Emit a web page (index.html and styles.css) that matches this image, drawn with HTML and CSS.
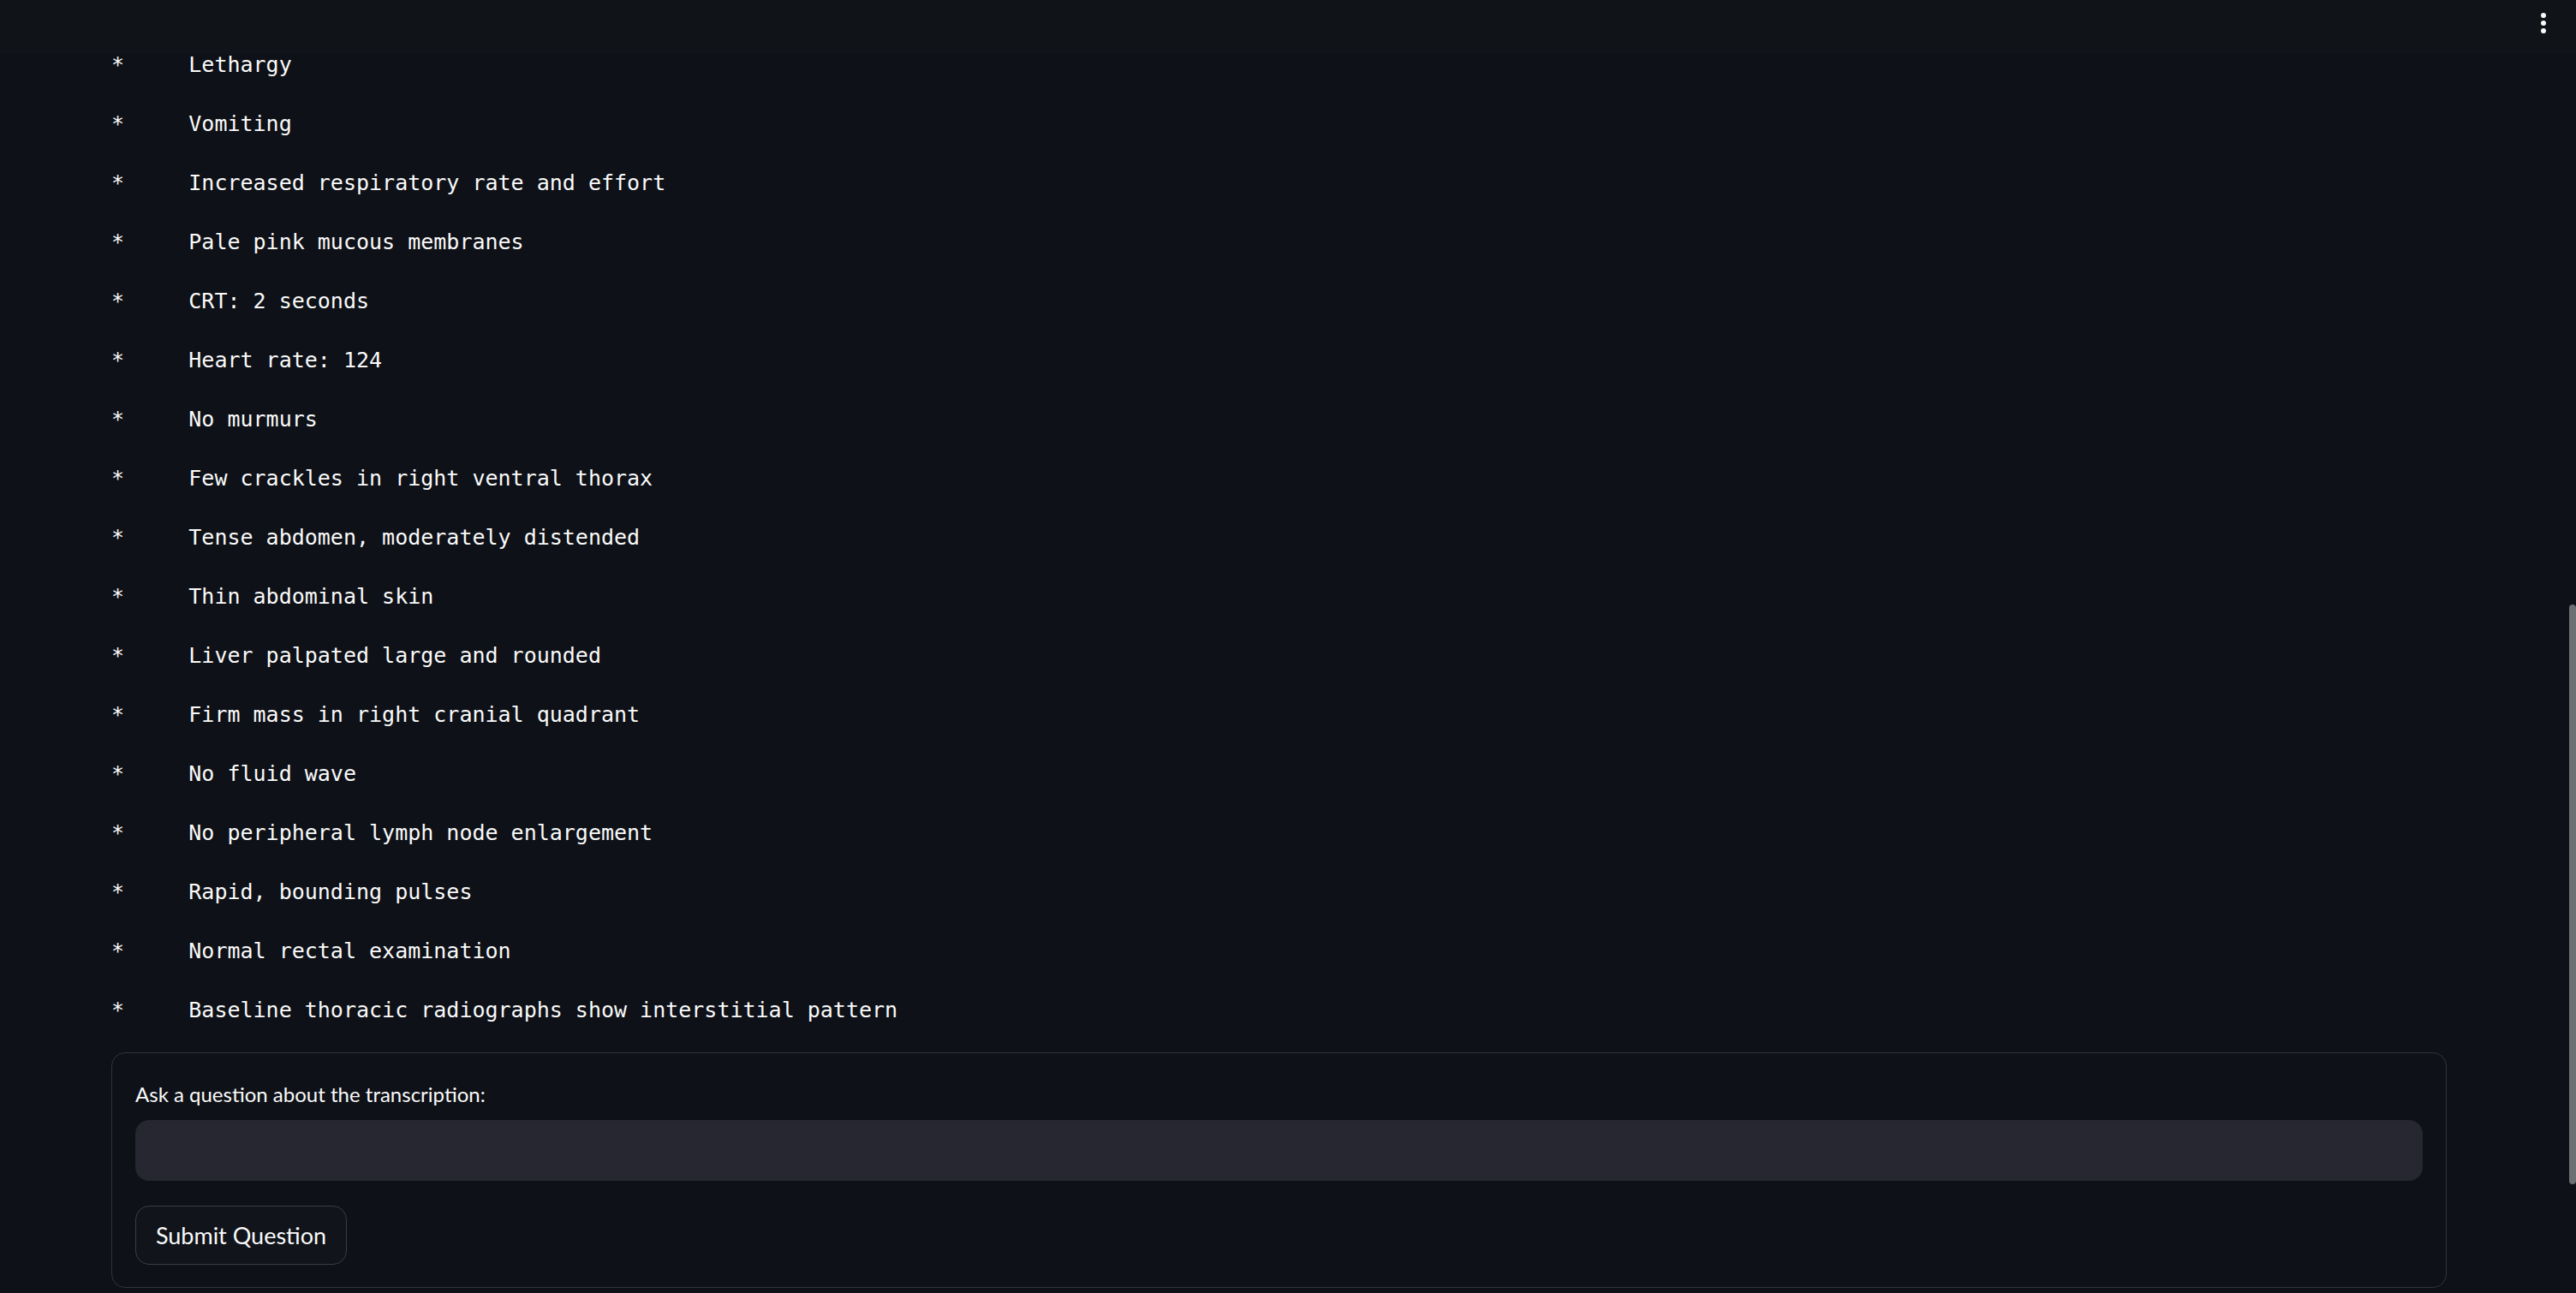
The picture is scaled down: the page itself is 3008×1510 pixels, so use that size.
FILE: index.html
```html
<!DOCTYPE html>
<html lang="en">

<head>
    <meta charset="UTF-8" />
    <meta name="viewport" content="width=device-width, initial-scale=1" />
    <title>Transcription</title>
    <link rel="stylesheet" href="styles.css">
</head>

<body>

    <!-- Top bar -->
    <header class="top-bar">
        <button class="menu-btn" aria-label="Main menu">
            <span class="dot"></span>
            <span class="dot"></span>
            <span class="dot"></span>
        </button>
    </header>

    <main class="main-block">

        <!-- Transcription -->
        <div class="transcript">
            <div class="line">*     Lethargy</div>
            <div class="line">*     Vomiting</div>
            <div class="line">*     Increased respiratory rate and effort</div>
            <div class="line">*     Pale pink mucous membranes</div>
            <div class="line">*     CRT: 2 seconds</div>
            <div class="line">*     Heart rate: 124</div>
            <div class="line">*     No murmurs</div>
            <div class="line">*     Few crackles in right ventral thorax</div>
            <div class="line">*     Tense abdomen, moderately distended</div>
            <div class="line">*     Thin abdominal skin</div>
            <div class="line">*     Liver palpated large and rounded</div>
            <div class="line">*     Firm mass in right cranial quadrant</div>
            <div class="line">*     No fluid wave</div>
            <div class="line">*     No peripheral lymph node enlargement</div>
            <div class="line">*     Rapid, bounding pulses</div>
            <div class="line">*     Normal rectal examination</div>
            <div class="line">*     Baseline thoracic radiographs show interstitial pattern</div>
        </div>

        <!-- Question form -->
        <form class="question-form" onsubmit="return false;">
            <label class="field-label" for="question">Ask a question about the transcription:</label>
            <input class="text-input" id="question" type="text" />
            <button class="submit-btn" type="submit">Submit Question</button>
        </form>

    </main>

    <div class="scroll-thumb"></div>

</body>

</html>
```

FILE: styles.css
```css
body {
    margin: 0;
    background-color: #0e1117;
    color: #fafafa;
    font-family: Lato, "Noto Sans", sans-serif;
    overflow: hidden;
}

.top-bar {
    position: fixed;
    top: 0;
    left: 0;
    right: 0;
    height: 63px;
    background-color: #101318;
    z-index: 5;
}

.menu-btn {
    position: absolute;
    top: 15px;
    right: 32px;
    width: 12px;
    display: flex;
    flex-direction: column;
    align-items: center;
    gap: 3px;
    padding: 0;
    border: none;
    background: none;
    cursor: pointer;
}

.dot {
    width: 6px;
    height: 6px;
    border-radius: 50%;
    background-color: #fafafa;
}

.main-block {
    padding: 41px 151px 0 130px;
}

.line {
    font-family: "DejaVu Sans Mono", "Liberation Mono", monospace;
    font-size: 25px;
    line-height: 69px;
    height: 69px;
    white-space: pre;
    color: #fafafa;
}

.question-form {
    margin-top: 15px;
    border: 1px solid #31333a;
    border-radius: 16px;
    padding: 31px 27px 26px;
    display: flex;
    flex-direction: column;
    align-items: flex-start;
}

.field-label {
    font-size: 24px;
    line-height: 34px;
    color: #fafafa;
    margin-bottom: 13px;
}

.text-input {
    box-sizing: border-box;
    width: 100%;
    height: 71px;
    border: none;
    border-radius: 16px;
    background-color: #262730;
    color: #fafafa;
    font-size: 28px;
    padding: 0 24px;
    margin: 0 0 29px;
    outline: none;
}

.submit-btn {
    box-sizing: border-box;
    width: 247px;
    height: 69px;
    border: 1px solid #3a3c44;
    border-radius: 16px;
    background-color: #11141b;
    color: #fafafa;
    font-family: Lato, "Noto Sans", sans-serif;
    font-size: 27px;
    padding: 0;
    cursor: pointer;
}

.submit-btn:hover {
    border-color: #ff4b4b;
    color: #ff4b4b;
}

.scroll-thumb {
    position: fixed;
    top: 706px;
    right: 0;
    width: 8px;
    height: 677px;
    border-radius: 4px;
    background-color: #6d6f74;
}
```
